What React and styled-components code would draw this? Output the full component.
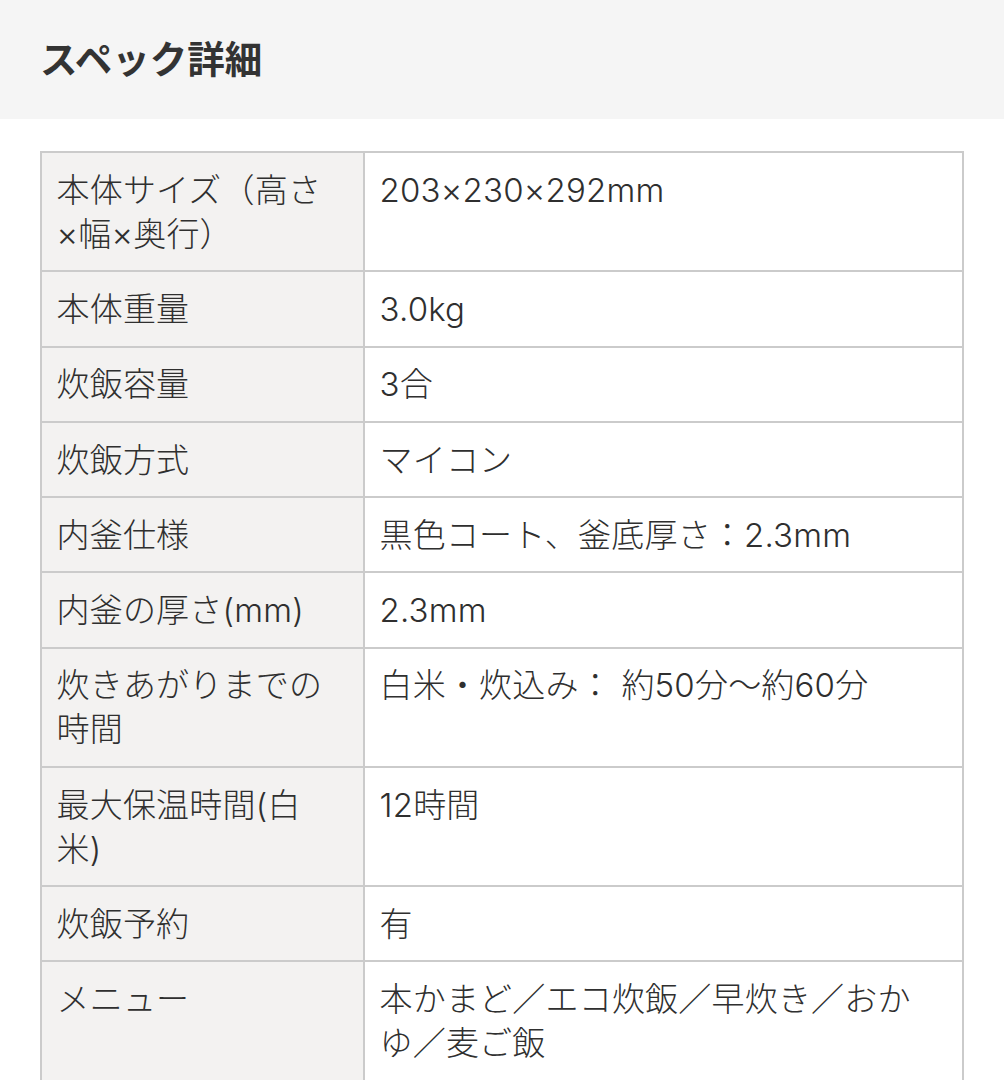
import React from "react";
import styled, { createGlobalStyle } from "styled-components";

const GlobalStyle = createGlobalStyle`
  html, body {
    margin: 0;
    padding: 0;
    background: #ffffff;
  }
  body {
    font-family: "Noto Sans CJK JP", "Noto Sans", sans-serif;
    color: #333333;
  }
`;

const Page = styled.div`
  width: 1004px;
  min-height: 1080px;
  background: #ffffff;
`;

const Header = styled.header`
  height: 119px;
  background: #f5f5f5;
  display: flex;
  align-items: center;
  padding: 0 40px;
  box-sizing: border-box;
`;

const Title = styled.h2`
  margin: 0;
  font-size: 37.5px;
  font-weight: 700;
  color: #333333;
  letter-spacing: 0;
  line-height: 1;
  transform: translateY(-3px);
  font-family: "Noto Sans CJK JP", sans-serif;
`;

const Body = styled.section`
  padding: 32px 40px 0 40px;
`;

const SpecTable = styled.table`
  width: 924px;
  border-collapse: collapse;
  table-layout: fixed;
`;

const Row = styled.tr``;

const Cell = styled.td`
  border: 2px solid #cbcbcb;
  padding: 14.75px 16px 14.5px 14.5px;
  font-size: 33px;
  line-height: 44px;
  font-weight: 300;
  color: #2f2f2f;
  vertical-align: top;
  white-space: pre-line;
  background: ${(p) => (p.$head ? "#f3f2f1" : "#ffffff")};
  width: ${(p) => (p.$head ? "290.5px" : "auto")};
  font-family: "Inter", "Noto Sans CJK JP", sans-serif;
  letter-spacing: 0.2px;
`;

const specs = [
  ["本体サイズ（高さ\n×幅×奥行）", "203×230×292mm"],
  ["本体重量", "3.0kg"],
  ["炊飯容量", "3合"],
  ["炊飯方式", "マイコン"],
  ["内釜仕様", "黒色コート、釜底厚さ：2.3mm"],
  ["内釜の厚さ(mm)", "2.3mm"],
  ["炊きあがりまでの\n時間", "白米・炊込み： 約50分〜約60分"],
  ["最大保温時間(白\n米)", "12時間"],
  ["炊飯予約", "有"],
  ["メニュー", "本かまど／エコ炊飯／早炊き／おか\nゆ／麦ご飯"],
];

export default function App() {
  return (
    <Page>
      <GlobalStyle />
      <Header>
        <Title>スペック詳細</Title>
      </Header>
      <Body>
        <SpecTable>
          <tbody>
            {specs.map(([k, v]) => (
              <Row key={k}>
                <Cell $head>{k}</Cell>
                <Cell>{v}</Cell>
              </Row>
            ))}
          </tbody>
        </SpecTable>
      </Body>
    </Page>
  );
}
